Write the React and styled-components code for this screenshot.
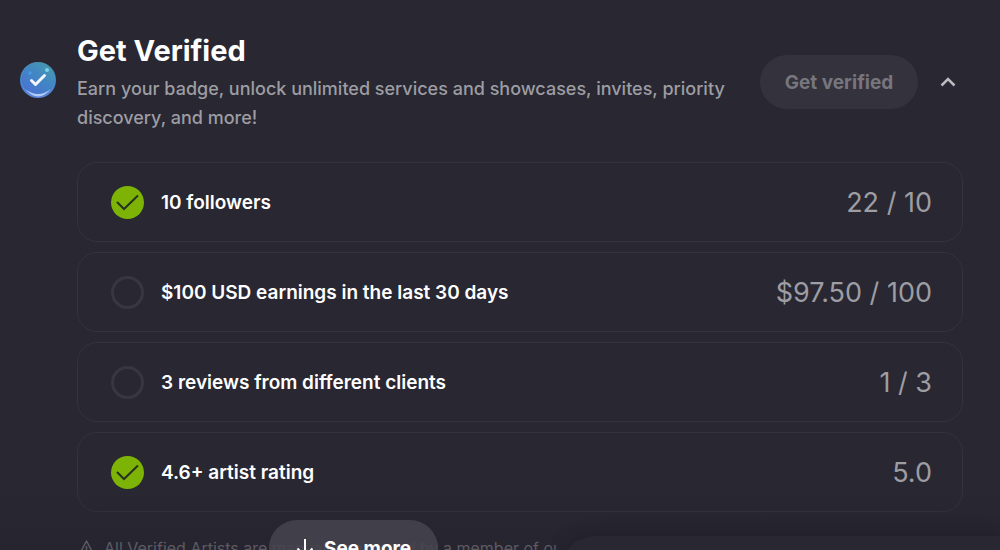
import React from "react";
import styled, { createGlobalStyle } from "styled-components";

const GlobalStyle = createGlobalStyle`
  *, *::before, *::after { box-sizing: border-box; }
  html, body { margin: 0; background: #282732; }
  body {
    color: #fff;
    font-family: Inter, "Liberation Sans", sans-serif;
    overflow: hidden;
  }
  h2, p, ul { margin: 0; padding: 0; }
  button { font: inherit; border: 0; padding: 0; color: inherit; cursor: pointer; }
`;

const Page = styled.main`
  position: relative;
  height: 100vh;
  overflow: hidden;
  padding: 32px 37px 0 20px;
`;

const Header = styled.header`
  display: flex;
  align-items: center;
`;

const Badge = styled.svg`
  flex: none;
  width: 36px;
  height: 36px;
  margin: 0 21px 4px 0;
`;

const Intro = styled.div`
  flex: 1;
  min-width: 0;
`;

const Title = styled.h2`
  font-size: 29px;
  font-weight: 700;
  line-height: 38px;
  margin-bottom: 4px;
`;

const Description = styled.p`
  color: #9d9da2;
  font-size: 18px;
  font-weight: 500;
  line-height: 29px;
`;

const VerifyButton = styled.button`
  flex: none;
  height: 54px;
  min-width: 158px;
  margin-left: 24px;
  padding: 0 24px;
  border-radius: 27px;
  background: #33323d;
  color: #77767d;
  font-size: 19px;
  font-weight: 700;
`;

const ToggleButton = styled.button`
  flex: none;
  display: grid;
  place-items: center;
  width: 30px;
  height: 30px;
  margin-left: 15px;
  background: none;
  color: #bbbbc0;
`;

const Body = styled.div`
  padding: 30px 0 0 57px;
`;

const Requirements = styled.ul`
  display: grid;
  gap: 10px;
  list-style: none;
`;

const Requirement = styled.li`
  display: flex;
  align-items: center;
  height: 80px;
  padding: 0 30px 0 33px;
  border: 1px solid #33323d;
  border-radius: 20px;
`;

const Status = styled.span`
  flex: none;
  display: grid;
  place-items: center;
  width: 33px;
  height: 33px;
  margin-right: 17px;
  border-radius: 50%;
  border: ${(p) => (p.$done ? "0" : "3px solid #383741")};
  background: ${(p) => (p.$done ? "#7cb305" : "transparent")};
`;

const Label = styled.span`
  flex: 1;
  font-size: 19px;
  font-weight: 600;
`;

const Value = styled.span`
  color: #9d9da2;
  font-size: 27px;
`;

const Note = styled.p`
  display: flex;
  align-items: center;
  gap: 8px;
  max-width: 480px;
  margin-top: 24px;
  overflow: hidden;
  color: #77767e;
  font-size: 16px;
  line-height: 24px;
  white-space: nowrap;

  svg { flex: none; }
`;

const BottomFade = styled.div`
  position: absolute;
  inset: auto 0 0 0;
  height: 60px;
  background: linear-gradient(to bottom, rgba(34, 32, 42, 0), rgba(34, 32, 42, 0.35));
  pointer-events: none;
`;

const SeeMore = styled.button`
  position: absolute;
  left: 269px;
  bottom: -26px;
  display: flex;
  align-items: center;
  gap: 9px;
  height: 56px;
  min-width: 169px;
  padding: 0 24px 0 26px;
  border-radius: 28px;
  background: rgba(69, 68, 78, 0.9);
  color: #fff;
  font-size: 19px;
  font-weight: 700;
`;

const Dock = styled.aside`
  position: absolute;
  left: 557px;
  right: 0;
  bottom: -46px;
  height: 60px;
  border-radius: 40px 0 0 0;
  background: #282732;
  box-shadow: 0 -4px 16px rgba(24, 22, 32, 0.3);
`;

const requirements = [
  { label: "10 followers", value: "22 / 10", done: true },
  { label: "$100 USD earnings in the last 30 days", value: "$97.50 / 100", done: false },
  { label: "3 reviews from different clients", value: "1 / 3", done: false },
  { label: "4.6+ artist rating", value: "5.0", done: true },
];

function VerifiedBadge() {
  return (
    <Badge viewBox="0 0 36 36" aria-hidden="true">
      <defs>
        <linearGradient id="rim" x1="0" y1="0" x2="0" y2="1">
          <stop offset="0" stopColor="#4a8fae" />
          <stop offset="0.6" stopColor="#4387cc" />
          <stop offset="1" stopColor="#5d83dc" />
        </linearGradient>
        <linearGradient id="face" x1="0.9" y1="0" x2="0.2" y2="1">
          <stop offset="0" stopColor="#459cae" />
          <stop offset="0.5" stopColor="#4285c4" />
          <stop offset="1" stopColor="#4c70d6" />
        </linearGradient>
      </defs>
      <circle cx="18" cy="18" r="18" fill="url(#rim)" />
      <circle cx="18" cy="17" r="16.5" fill="url(#face)" />
      <path d="M5 27Q18 42 31 27Q18 37 5 27Z" fill="#b0cdf5" />
      <circle cx="27" cy="8" r="2" fill="#7bd3e4" />
      <circle cx="10" cy="11" r="1.800" fill="#459ce2" />
      <path d="M11.500 18.500L15.500 22.500L24.500 13.500" fill="none" stroke="#f1f5ff" strokeWidth="3" strokeLinecap="round" strokeLinejoin="round" />
    </Badge>
  );
}

export default function App() {
  return (
    <>
      <GlobalStyle />
      <Page>
        <Header>
          <VerifiedBadge />
          <Intro>
            <Title>Get Verified</Title>
            <Description>
              Earn your badge, unlock unlimited services and showcases, invites, priority discovery, and more!
            </Description>
          </Intro>
          <VerifyButton type="button" disabled>Get verified</VerifyButton>
          <ToggleButton type="button" aria-label="Collapse" aria-expanded="true">
            <svg width="16" height="10" viewBox="0 0 16 10" fill="none" stroke="currentColor" strokeWidth="2.500" aria-hidden="true">
              <path d="M1.500 8.500L8 2L14.500 8.500" />
            </svg>
          </ToggleButton>
        </Header>
        <Body>
          <Requirements>
            {requirements.map(({ label, value, done }) => (
              <Requirement key={label}>
                <Status $done={done} role="img" aria-label={done ? "Complete" : "Incomplete"}>
                  {done && (
                    <svg width="33" height="33" viewBox="0 0 33 33" fill="none" stroke="#27321f" strokeWidth="2" aria-hidden="true">
                      <path d="M6 16L13 23L27 9.500" />
                    </svg>
                  )}
                </Status>
                <Label>{label}</Label>
                <Value>{value}</Value>
              </Requirement>
            ))}
          </Requirements>
          <Note>
            <svg width="19" height="18" viewBox="0 0 19 18" fill="none" stroke="currentColor" strokeWidth="1.500" strokeLinejoin="round" aria-hidden="true">
              <path d="M9.500 2L17 16H2Z M9.500 7V11 M9.500 13V14" />
            </svg>
            All Verified Artists are manually approved by a member of our team
          </Note>
        </Body>
        <BottomFade />
        <SeeMore type="button">
          <svg width="20" height="20" viewBox="0 0 20 20" fill="none" stroke="currentColor" strokeWidth="2" aria-hidden="true">
            <path d="M10 1V18 M2.500 10.500L10 18L17.500 10.500" />
          </svg>
          See more
        </SeeMore>
        <Dock />
      </Page>
    </>
  );
}
